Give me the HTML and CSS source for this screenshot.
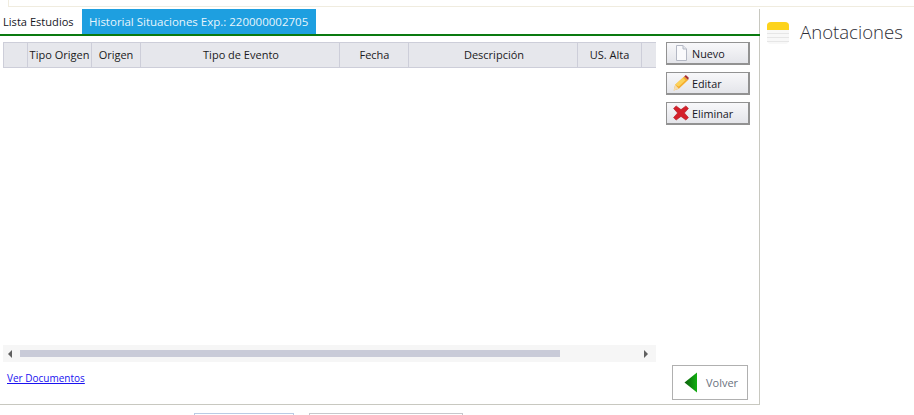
FILE: index.html
```html
<!DOCTYPE html>
<html lang="es">
<head>
<meta charset="utf-8">
<title>Historial Situaciones</title>
<link rel="stylesheet" href="styles.css">
</head>
<body>
<div class="top-strip"><div class="top-box"></div></div>
<div class="main">
  <section class="panel">
    <nav class="tabs">
      <span class="tab">Lista Estudios</span>
      <span class="tab active">Historial Situaciones Exp.: 220000002705</span>
    </nav>
    <div class="content">
      <div class="left">
        <div class="grid-wrap">
          <div class="grid-head">
            <div class="c c0"></div>
            <div class="c c1">Tipo Origen</div>
            <div class="c c2">Origen</div>
            <div class="c c3">Tipo de Evento</div>
            <div class="c c4">Fecha</div>
            <div class="c c5">Descripción</div>
            <div class="c c6">US. Alta</div>
            <div class="c c7"></div>
          </div>
          <div class="grid-body"></div>
          <div class="hscroll">
            <span class="arrow arrow-l"></span>
            <div class="track"><div class="thumb"></div></div>
            <span class="arrow arrow-r"></span>
          </div>
        </div>
        <a class="link" href="#">Ver Documentos</a>
      </div>
      <div class="right">
        <div class="actions">
          <button class="btn" type="button">
            <svg class="ico" width="16" height="18" viewBox="0 0 16 18"><path d="M3.5 1.5H10L13.5 5V16.5H3.5Z" fill="#fafafc" stroke="#b4b8c4"/><path d="M10 1.5V5H13.5" fill="#e4e6ec" stroke="#b4b8c4"/></svg>
            <span>Nuevo</span>
          </button>
          <button class="btn" type="button">
            <svg class="ico" width="16" height="18" viewBox="0 0 18 18"><path d="M.8 17.5L2.4 11L12.6 1.6L17 5.6L6.6 15.6Z" fill="#f5ad2e"/><path d="M12.6 1.6L14.4 0L17.8 3.2L17 5.6Z" fill="#a83232"/><path d="M2.4 11L11 3.2L14 6L6.6 13Z" fill="#fcd25a"/><path d="M.8 17.5L2.4 11L6.6 15.6Z" fill="#f3dcb0"/></svg>
            <span>Editar</span>
          </button>
          <button class="btn" type="button">
            <svg class="ico" width="16" height="16" viewBox="0 0 18 18"><path d="M3.5 1L9 5.2L14.5 1L17.4 3.8L12.8 9L17.4 14.2L14.5 17L9 12.8L3.5 17L.6 14.2L5.2 9L.6 3.8Z" fill="#d4202a" stroke="#a8141c" stroke-width=".6"/></svg>
            <span>Eliminar</span>
          </button>
        </div>
        <button class="back" type="button">
          <svg width="14" height="21" viewBox="0 0 14 21"><defs><linearGradient id="g" x1="0" x2="1" y1="0" y2="0"><stop offset="0" stop-color="#0b5f0b"/><stop offset="1" stop-color="#12b012"/></linearGradient></defs><path d="M13 .5V20.5L.5 10.5Z" fill="url(#g)"/></svg>
          <span>Volver</span>
        </button>
      </div>
    </div>
  </section>
  <aside class="notes">
    <svg class="notes-ico" width="22" height="22" viewBox="0 0 22 22"><path d="M0 8V3.5Q0 0 4 0H18Q22 0 22 3.5V8Z" fill="#fdd31c"/><path d="M0 8H22V18Q22 22 18 22H4Q0 22 0 18Z" fill="#f8f8f8"/><path d="M0 11.5H22M0 15.5H22M0 19.5H22" stroke="#e6e6e6"/></svg>
    <h2 class="notes-title">Anotaciones</h2>
  </aside>
</div>
<div class="footer-btns">
  <button class="foot foot-a" type="button"></button>
  <button class="foot foot-b" type="button"></button>
</div>
</body>
</html>
```
FILE: styles.css
```css
* { box-sizing: border-box; }
html, body { margin: 0; padding: 0; height: 415px; overflow: hidden; background: #fff; }
body { font-family: "Open Sans", "Noto Sans", sans-serif; font-size: 11px; color: #1a1a22; }

.top-strip { height: 9px; }
.top-box { height: 7px; margin-left: 8px; border-left: 1px solid #f0ecdf; border-bottom: 1px solid #f0ecdf; }

.main { display: flex; height: 396px; }
.panel { width: 760px; flex: none; display: flex; flex-direction: column; border-right: 1px solid #c8c8c0; border-bottom: 1px solid #c8c8c0; }

.tabs { display: flex; height: 27px; border-bottom: 2px solid #0a7a10; flex: none; margin-right: -1px; }
.tab { display: flex; align-items: center; height: 25px; padding: 0 0 0 3px; font-size: 11.1px; color: #16161e; white-space: nowrap; width: 82px; }
.tab.active { background: #1e9fe0; color: #e8f5fc; width: 234px; padding: 0 0 0 7px; font-size: 11.5px; }

.content { flex: 1; display: flex; min-height: 0; }
.left { width: 666px; flex: none; padding: 6px 0 0 3px; display: flex; flex-direction: column; }
.grid-wrap { width: 653px; flex: none; display: flex; flex-direction: column; height: 320px; }
.grid-head { display: flex; height: 26px; background: #e6e7ec; border-top: 1px solid #cdced9; border-bottom: 1px solid #cdced9; border-left: 1px solid #cdced9; flex: none; }
.c { display: flex; align-items: center; justify-content: center; border-right: 1px solid #cdced9; white-space: nowrap; font-size: 11px; padding-bottom: 1px; }
.c0 { width: 24px; }
.c1 { width: 64px; }
.c2 { width: 49px; }
.c3 { width: 199px; padding-left: 2px; }
.c4 { width: 69px; padding-left: 1px; }
.c5 { width: 169px; padding-left: 2px; }
.c6 { width: 64px; }
.c7 { width: 14px; border-right: 0; }
.grid-body { flex: 1; }
.hscroll { height: 17px; background: #f6f6f6; display: flex; align-items: center; flex: none; }
.track { flex: 1; height: 7px; margin: 0 8px 0 5px; }
.thumb { width: 540px; height: 7px; background: #c9cbd8; }
.arrow { width: 0; height: 0; border-top: 4px solid transparent; border-bottom: 4px solid transparent; flex: none; }
.arrow-l { margin-left: 5px; border-right: 4px solid #606060; margin-right: 3px; }
.arrow-r { margin-right: 8px; border-left: 4px solid #606060; }
.link { margin: 9px 0 0 4px; font-size: 10px; color: #1a12f0; text-decoration: underline; }

.right { flex: 1; min-width: 0; display: flex; flex-direction: column; justify-content: space-between; padding: 6px 11px 4px 0; }
.actions { display: flex; flex-direction: column; gap: 7px; }
.btn { width: 84px; height: 23px; display: flex; align-items: center; gap: 3px; padding: 0 0 0 6px; border: 1px solid #929292; border-right: 2px solid #929292; border-bottom: 2px solid #929292; background: linear-gradient(#f8f8fa, #e4e5ea); font: 10.8px "Open Sans", "Noto Sans", sans-serif; color: #16161e; }
.btn .ico { flex: none; }
.back { align-self: flex-end; width: 76px; height: 35px; display: flex; align-items: center; gap: 8px; padding: 0 0 0 11px; border: 1px solid #b0b0b0; background: #fff; font: 11px "Open Sans", "Noto Sans", sans-serif; color: #6a7280; }

.notes { flex: 1; display: flex; align-items: flex-start; gap: 11px; padding: 13px 0 0 7px; }
.notes-ico { flex: none; }
.notes-title { margin: -2px 0 0; font-size: 18.6px; font-weight: 300; line-height: 24px; color: #2c2c34; font-family: "Open Sans", "Noto Sans", sans-serif; }

.footer-btns { display: flex; padding: 8px 0 0 194px; gap: 15px; }
.foot { height: 20px; background: #fff; border: 1px solid #c6c8cc; padding: 0; }
.foot-a { width: 100px; border-color: #b9cbe4; }
.foot-b { width: 154px; }
```
